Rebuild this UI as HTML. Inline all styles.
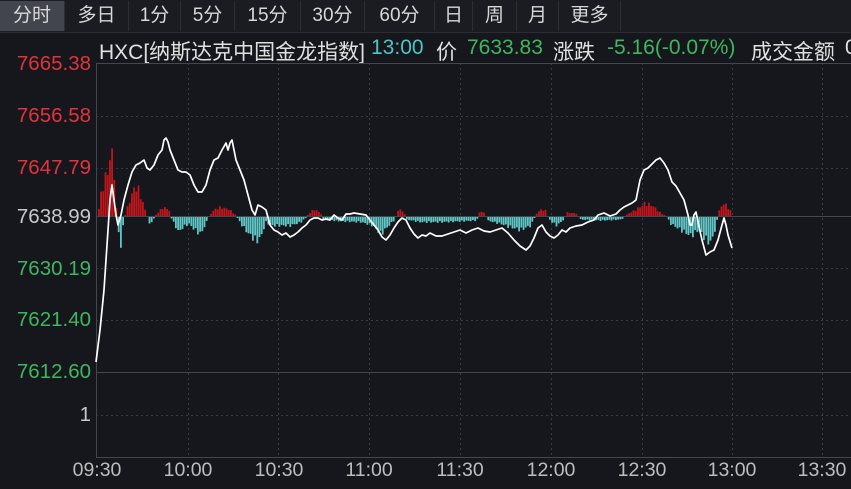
<!DOCTYPE html>
<html><head><meta charset="utf-8"><style>
body{margin:0;width:851px;height:489px;background:#16171c;overflow:hidden;font-family:"Liberation Sans","Noto Sans CJK SC",sans-serif;position:relative}
.tabs{position:absolute;left:0;top:0;height:32px;width:851px;background:#1b1c21;border-bottom:1px solid #2c2d33}
.tab{position:absolute;top:1px;height:30px;line-height:30px;text-align:center;color:#d8d8d8;font-size:19px;border-right:1px solid #2e2f35}
.tab.a{background:#42454d}
.h{position:absolute;top:36px;font-size:21px;color:#e0e0e0;white-space:nowrap}
.lab{position:absolute;right:760px;font-size:20.5px;text-align:right;white-space:nowrap}
.t{position:absolute;top:459px;font-size:19.5px;color:#bdbdbd;transform:translateX(-50%)}
</style></head><body>
<div class="tabs">
<div class="tab a" style="left:0;width:64px">分时</div>
<div class="tab" style="left:65px;width:63px">多日</div>
<div class="tab" style="left:129px;width:51px">1分</div>
<div class="tab" style="left:181px;width:53px">5分</div>
<div class="tab" style="left:235px;width:65px">15分</div>
<div class="tab" style="left:301px;width:63px">30分</div>
<div class="tab" style="left:365px;width:69px">60分</div>
<div class="tab" style="left:435px;width:37px">日</div>
<div class="tab" style="left:473px;width:43px">周</div>
<div class="tab" style="left:517px;width:41px">月</div>
<div class="tab" style="left:559px;width:61px">更多</div>
</div>
<span class="h" style="left:99px">HXC[纳斯达克中国金龙指数]</span>
<span class="h" style="left:371px;color:#4fc4c4">13:00</span>
<span class="h" style="left:436px">价</span>
<span class="h" style="left:467px;color:#3fb55e">7633.83</span>
<span class="h" style="left:553px">涨跌</span>
<span class="h" style="left:607px;color:#3fb55e">-5.16(-0.07%)</span>
<span class="h" style="left:751px">成交金额</span>
<span class="h" style="left:845px">0</span>
<div class="lab" style="top:52px;color:#e0333c">7665.38</div>
<div class="lab" style="top:104px;color:#e0333c">7656.58</div>
<div class="lab" style="top:156px;color:#e0333c">7647.79</div>
<div class="lab" style="top:205px;color:#c8c8c8">7638.99</div>
<div class="lab" style="top:257px;color:#3fb55e">7630.19</div>
<div class="lab" style="top:308px;color:#3fb55e">7621.40</div>
<div class="lab" style="top:360px;color:#3fb55e">7612.60</div>
<div class="lab" style="top:403px;color:#c8c8c8">1</div>
<div class="t" style="left:97px">09:30</div>
<div class="t" style="left:188px">10:00</div>
<div class="t" style="left:279px">10:30</div>
<div class="t" style="left:369px">11:00</div>
<div class="t" style="left:460px">11:30</div>
<div class="t" style="left:551px">12:00</div>
<div class="t" style="left:642px">12:30</div>
<div class="t" style="left:732px">13:00</div>
<div class="t" style="left:822px">13:30</div>
<svg id="s" width="851" height="489" style="position:absolute;left:0;top:0">
<g stroke="#3a3c44" stroke-width="1" stroke-dasharray="2,3" fill="none">
<line x1="96" y1="116.5" x2="851" y2="116.5"/><line x1="96" y1="168.5" x2="851" y2="168.5"/>
<line x1="96" y1="268.5" x2="851" y2="268.5"/><line x1="96" y1="320.5" x2="851" y2="320.5"/>
<line x1="96" y1="415.5" x2="851" y2="415.5"/>
<line x1="188.5" y1="63" x2="188.5" y2="458"/><line x1="278.5" y1="63" x2="278.5" y2="458"/>
<line x1="369.5" y1="63" x2="369.5" y2="458"/><line x1="460.5" y1="63" x2="460.5" y2="458"/>
<line x1="551.5" y1="63" x2="551.5" y2="458"/><line x1="642.5" y1="63" x2="642.5" y2="458"/>
<line x1="732.5" y1="63" x2="732.5" y2="458"/><line x1="822.5" y1="63" x2="822.5" y2="458"/>
</g>
<g stroke="#44464e" stroke-width="1">
<line x1="96" y1="63.5" x2="851" y2="63.5"/>
<line x1="96" y1="216.5" x2="851" y2="216.5"/>
<line x1="96" y1="372.5" x2="851" y2="372.5"/>
<line x1="96" y1="457.5" x2="851" y2="457.5"/>
<line x1="96.5" y1="63" x2="96.5" y2="458"/>
</g>
<g id="bars"></g>
<polyline fill="none" stroke="#ffffff" stroke-width="1.7" stroke-linejoin="round" points="96,362 100,330 104,290 108,230 110,200 112,185 114,200 116,215 118,225 121,215 124,200 128,185 132,172 136,165 140,163 144,160 147,168 150,170 154,165 158,155 162,150 164,140 166,138 168,142 170,150 174,160 178,170 182,172 186,172 190,175 194,185 198,192 202,192 206,185 210,170 214,160 218,158 222,150 226,143 228,150 230,143 232,140 234,150 236,160 240,170 244,180 248,195 252,210 255,215 258,205 262,207 266,210 270,225 274,230 278,232 282,235 286,233 290,237 294,235 298,232 302,228 306,225 310,220 314,218 318,218 322,220 326,219 330,220 334,215 338,218 342,220 346,214 350,214 354,213 360,214 366,215 370,220 374,225 378,230 382,237 386,240 390,235 394,228 398,222 402,218 406,220 410,228 414,234 418,238 422,235 426,236 430,233 436,236 442,236 448,234 454,232 460,230 466,233 472,230 478,228 484,231 490,232 496,230 502,228 508,233 514,240 520,246 526,250 530,246 534,238 538,228 542,225 546,232 550,236 554,238 558,235 562,230 566,232 570,228 576,226 582,225 588,222 594,220 598,215 604,213 610,216 616,214 620,210 624,207 628,205 632,203 636,200 640,180 644,170 648,168 652,164 656,160 660,158 664,163 668,170 672,182 676,186 680,193 684,200 688,215 690,225 692,225 694,215 696,212 698,222 702,240 706,255 710,252 714,250 718,240 722,225 724,218 726,225 728,235 732,248"/>
</svg>
<script>
var k=[[97,0],[100,25],[106,50],[110,70],[112,75],[114,40],[116,0],[117,-15],[120,-35],[122,-10],[124,0],[128,15],[134,35],[138,30],[144,8],[146,0],[148,-5],[150,-10],[152,-3],[154,0],[158,5],[162,10],[168,8],[170,0],[172,-5],[178,-18],[182,-12],[188,-8],[194,-15],[200,-20],[204,-10],[208,0],[214,8],[220,10],[228,8],[236,0],[240,-8],[248,-20],[256,-28],[262,-20],[264,-5],[270,-10],[290,-10],[300,-6],[306,0],[310,5],[314,8],[320,3],[322,-3],[340,-5],[360,-6],[372,-10],[380,-20],[388,-10],[394,-3],[398,8],[402,6],[406,-3],[420,-6],[440,-6],[460,-5],[476,-4],[478,4],[484,5],[486,-4],[500,-8],[510,-12],[520,-15],[530,-10],[534,0],[538,6],[544,8],[547,0],[550,-5],[556,-10],[562,-4],[566,4],[576,3],[580,-3],[600,-4],[620,-3],[628,3],[636,8],[644,15],[652,12],[660,3],[666,0],[670,-8],[680,-15],[690,-22],[698,-15],[702,-22],[708,-30],[712,-25],[716,-5],[718,5],[722,15],[726,12],[730,5],[732,0]];
function h(x){for(var i=0;i<k.length-1;i++){if(x>=k[i][0]&&x<=k[i+1][0]){var t=(x-k[i][0])/(k[i+1][0]-k[i][0]);return k[i][1]+t*(k[i+1][1]-k[i][1]);}}return 0;}
var g=document.getElementById('bars'),s='';
for(var x=98;x<=731;x+=2.2){var v=h(x)*(0.85+0.15*Math.sin(x*1.7));if(Math.abs(v)<0.8)continue;
if(v>0)s+='<rect x="'+x.toFixed(1)+'" y="'+(216-v).toFixed(1)+'" width="1.8" height="'+v.toFixed(1)+'" fill="#c0161b"/>';
else s+='<rect x="'+x.toFixed(1)+'" y="217" width="1.8" height="'+(-v).toFixed(1)+'" fill="#5fc6c6"/>';}
g.innerHTML=s;
</script>
</body></html>
